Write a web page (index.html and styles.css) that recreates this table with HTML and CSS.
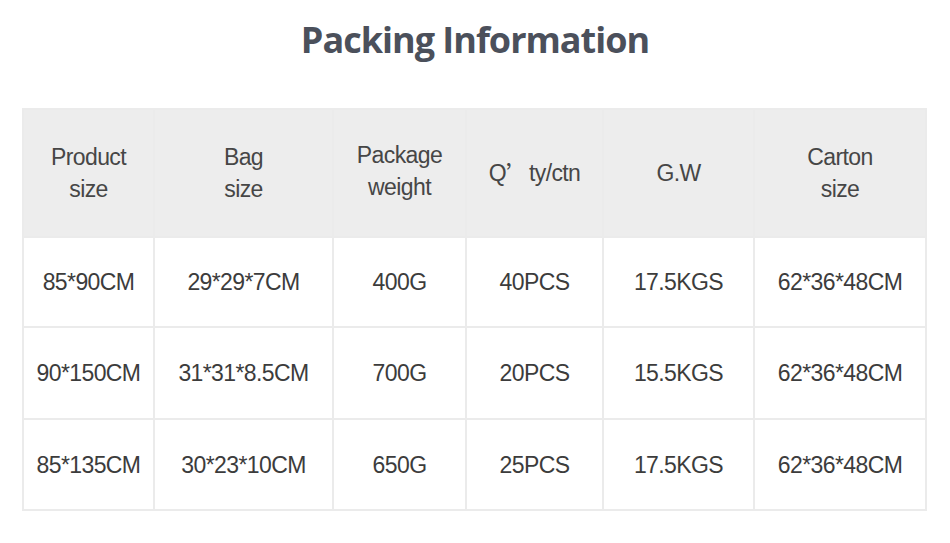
FILE: index.html
```html
<!DOCTYPE html>
<html lang="en">
<head>
<meta charset="utf-8">
<title>Packing Information</title>
<link rel="stylesheet" href="styles.css">
</head>
<body>
<main class="page">
  <h1 class="title">Packing Information</h1>
  <div class="table">
    <div class="cell head">Product<br>size</div>
    <div class="cell head">Bag<br>size</div>
    <div class="cell head head-up">Package<br>weight</div>
    <div class="cell head">Q<span class="cjk">’</span>ty/ctn</div>
    <div class="cell head">G.W</div>
    <div class="cell head">Carton<br>size</div>

    <div class="cell">85*90CM</div>
    <div class="cell">29*29*7CM</div>
    <div class="cell">400G</div>
    <div class="cell">40PCS</div>
    <div class="cell">17.5KGS</div>
    <div class="cell">62*36*48CM</div>

    <div class="cell">90*150CM</div>
    <div class="cell">31*31*8.5CM</div>
    <div class="cell">700G</div>
    <div class="cell">20PCS</div>
    <div class="cell">15.5KGS</div>
    <div class="cell">62*36*48CM</div>

    <div class="cell">85*135CM</div>
    <div class="cell">30*23*10CM</div>
    <div class="cell">650G</div>
    <div class="cell">25PCS</div>
    <div class="cell">17.5KGS</div>
    <div class="cell">62*36*48CM</div>
  </div>
</main>
</body>
</html>
```
FILE: styles.css
```css
html, body {
  margin: 0;
  padding: 0;
  background: #ffffff;
}

.page {
  width: 950px;
  padding-top: 18px;
  font-family: "Liberation Sans", Arial, sans-serif;
}

.title {
  margin: 0;
  height: 44px;
  font-family: "Open Sans", "Noto Sans", sans-serif;
  font-weight: 700;
  font-size: 36px;
  line-height: 44px;
  letter-spacing: -1px;
  color: #4b505b;
  text-align: center;
}

.table {
  margin: 46px 0 0 22px;
  width: 905px;
  box-sizing: border-box;
  display: grid;
  grid-template-columns: 129px 177px 131px 135px 149px 170px;
  grid-template-rows: 126px 88px 90px 89px;
  gap: 2px;
  padding: 2px;
  background: #ebebeb;
}

.cell {
  display: flex;
  align-items: center;
  justify-content: center;
  text-align: center;
  background: #ffffff;
  font-size: 23px;
  letter-spacing: -0.6px;
  line-height: 32px;
  color: #3c3c3c;
}

.head {
  background: #ededed;
  color: #464646;
}

.head-up {
  padding-bottom: 4px;
}

.cjk {
  font-family: "Noto Sans CJK SC", sans-serif;
  letter-spacing: 0;
}
```
